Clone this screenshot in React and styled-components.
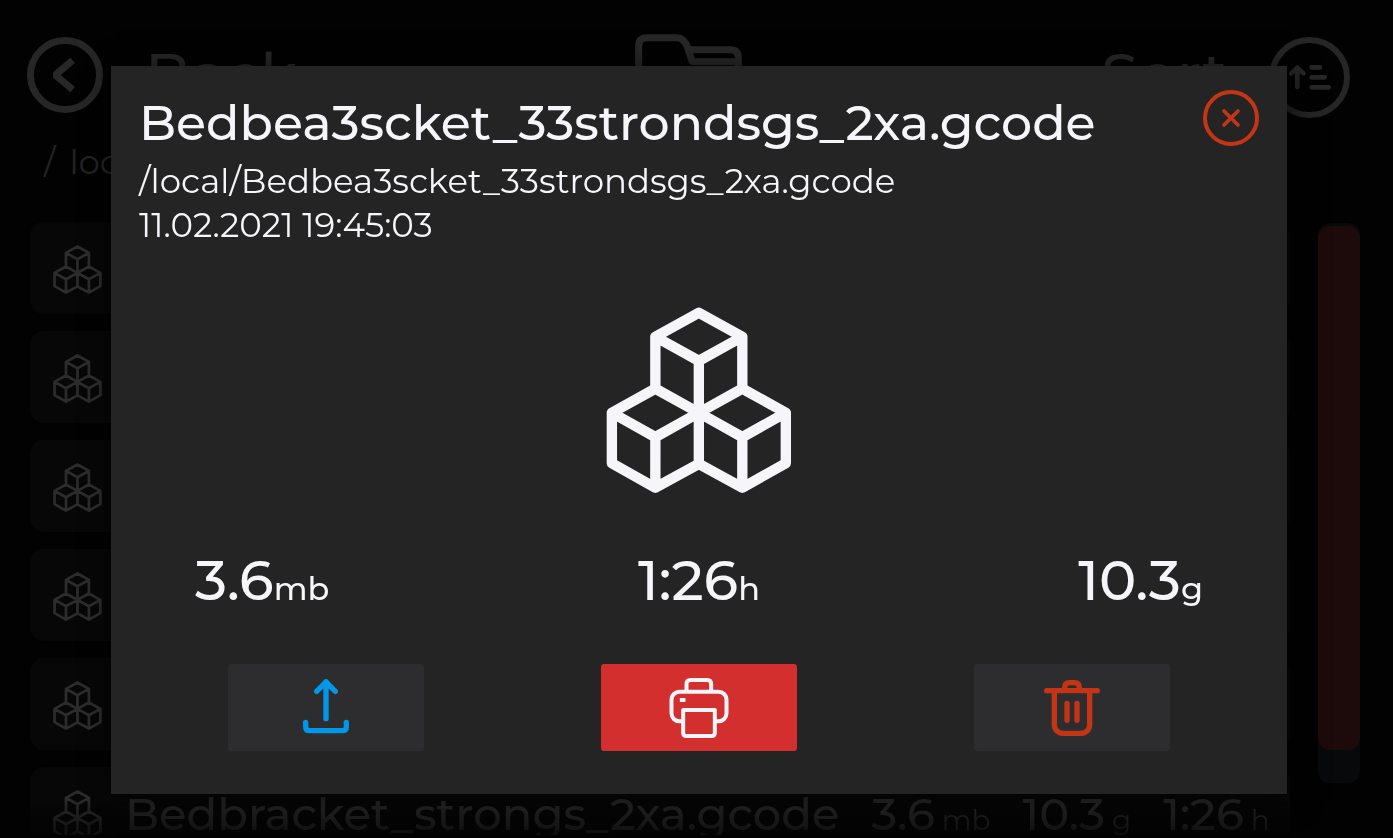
import React from 'react';
import styled, { createGlobalStyle } from 'styled-components';

const GlobalStyle = createGlobalStyle`
  * { box-sizing: border-box; }
  body {
    margin: 0;
    background: #020202;
    color: #f5f5fa;
    font-family: Montserrat, Inter, sans-serif;
  }
  button { font: inherit; color: inherit; padding: 0; cursor: pointer; }
  h1, p, ul { margin: 0; padding: 0; }
`;

const Page = styled.div`
  height: 100vh;
  display: flex;
  flex-direction: column;
  overflow: hidden;
  padding: 34px 33px 3px 30px;
  color: #272727;
`;

const Header = styled.header`
  display: grid;
  grid-template-columns: 1fr auto 1fr;
  align-items: start;
  height: 86px;
  padding-right: 10px;
  margin-left: -3px;
`;

const NavButton = styled.button`
  display: flex;
  align-items: flex-start;
  justify-self: ${(p) => p.$side};
  gap: 42px;
  padding-top: 3px;
  border: 0;
  background: none;
  font-size: 60px;
  line-height: 76px;
  font-weight: 500;
`;

const Ring = styled.span`
  display: grid;
  place-items: center;
  width: ${(p) => p.$size}px;
  height: ${(p) => p.$size}px;
  border: ${(p) => p.$stroke}px solid #262626;
  border-radius: 50%;
`;

const Icon = styled.svg`
  display: block;
  flex: none;
  fill: none;
  stroke: currentColor;
  stroke-linecap: round;
  stroke-linejoin: round;
`;

const Breadcrumb = styled.nav`
  display: flex;
  gap: 14px;
  margin: 20px 14px 0;
  font-size: 34px;
  line-height: 44px;
  color: #232323;
`;

const Browser = styled.main`
  flex: 1;
  min-height: 0;
  display: flex;
  gap: 28px;
  margin-top: 38px;
`;

const FileList = styled.ul`
  flex: 1;
  display: flex;
  flex-direction: column;
  gap: 17px;
  overflow: hidden;
  list-style: none;
  mask-image: linear-gradient(#000 94%, rgba(0, 0, 0, 0.3));
`;

const FileRow = styled.li`
  flex: none;
  display: flex;
  align-items: center;
  height: 92px;
  padding: 2px 22px 0 23px;
  border-radius: 14px;
  background: #070707;
  color: #2c2c2c;
  font-size: 45px;
  line-height: 56px;
  font-weight: 500;
`;

const FileName = styled.span`
  flex: 1;
  padding-left: 23px;
`;

const FileFact = styled.span`
  padding-left: 32px;
  small {
    margin-left: 7px;
    font-size: 28px;
    line-height: 1;
    font-weight: 400;
  }
`;

const ScrollTrack = styled.div`
  width: 42px;
  height: 560px;
  margin-top: 1px;
  padding-top: 3px;
  border-radius: 12px;
  background: #07090b;
`;

const ScrollThumb = styled.div`
  height: 94%;
  border-radius: 12px;
  background: #1d0b0c;
`;

const Overlay = styled.div`
  position: fixed;
  inset: 0;
  display: flex;
  align-items: flex-start;
  padding: 66px 106px 44px 111px;
`;

const Dialog = styled.section`
  flex: 1;
  padding: 24px 28px 43px;
  background: #242424;
  box-shadow: 5px 5px 28px rgba(0, 0, 0, 0.7);
`;

const DialogHead = styled.div`
  display: flex;
  align-items: flex-start;
  justify-content: space-between;
`;

const Title = styled.h1`
  font-size: 49px;
  line-height: 66px;
  font-weight: 500;
`;

const Details = styled.div`
  padding-top: 3px;
`;

const Detail = styled.p`
  font-size: 34px;
  line-height: 44px;
`;

const CloseButton = styled.button`
  display: grid;
  place-items: center;
  width: 56px;
  height: 56px;
  border: 4px solid #c43516;
  border-radius: 50%;
  background: none;
  && { color: #c43516; }
`;

const Preview = styled.div`
  display: flex;
  justify-content: center;
  margin-top: 60px;
`;

const Stats = styled.div`
  display: grid;
  grid-template-columns: repeat(3, 1fr);
  padding: 0 56px;
  margin-top: 51px;
  font-size: 56px;
  line-height: 72px;
  font-weight: 500;
`;

const Stat = styled.div`
  text-align: ${(p) => p.$align};
  small {
    font-size: 32px;
    line-height: 1;
  }
`;

const Actions = styled.div`
  display: grid;
  grid-template-columns: repeat(3, 1fr);
  justify-items: center;
  margin-top: 48px;
`;

const ActionButton = styled.button`
  display: grid;
  place-items: center;
  width: 196px;
  height: 87px;
  border: 0;
  border-radius: 3px;
  background: ${(p) => p.$fill || '#2d2d2f'};
  && { color: ${(p) => p.$color}; }
`;

function Cubes({ size, stroke }) {
  return (
    <Icon width={size} height={size} viewBox="0 0 553 556" strokeWidth={stroke} aria-hidden="true">
      <path d="M276 17 406 89 276 161 146 89ZM146 89V244M406 89V244M276 161V469M146 244 276 316 146 389 16 316ZM406 244 536 316 406 389 276 316ZM16 316V467L146 540 276 469 406 540 536 467V316M146 389V540M406 389V540" />
    </Icon>
  );
}

const files = [
  {}, {}, {}, {}, {},
  {
    name: 'Bedbracket_strongs_2xa.gcode',
    facts: [['3.6', 'mb'], ['10.3', 'g'], ['1:26', 'h']],
  },
];

export default function App() {
  return (
    <>
      <GlobalStyle />
      <Page>
        <Header>
          <NavButton $side="start">
            <Ring $size={76} $stroke={7}>
              <Icon width="26" height="34" viewBox="155 174 78 102" strokeWidth="21">
                <path d="M217 181 165 225 217 269" style={{ strokeLinecap: 'butt', strokeLinejoin: 'bevel' }} />
              </Icon>
            </Ring>
            Back
          </NavButton>
          <Icon width="107" height="86" viewBox="169 102 321 258" strokeWidth="21" aria-hidden="true">
            <path d="M180 325V138q0-25 25-25H295Q315 113 326 140L337 174Q339 185 348 185H468M333 149H455q24 0 24 24V325q0 24-24 24H205q-25 0-25-24" />
          </Icon>
          <NavButton $side="end">
            Sort
            <Ring $size={81} $stroke={6}>
              <Icon width="42" height="25" viewBox="624 200 126 75" strokeWidth="14">
                <path d="M649 266V208M631 225 649 208 667 225M692 207H717M692 237H731M692 267H743" />
              </Icon>
            </Ring>
          </NavButton>
        </Header>
        <Breadcrumb>
          <span>/</span>
          <span>local</span>
        </Breadcrumb>
        <Browser>
          <FileList>
            {files.map((file, i) => (
              <FileRow key={i}>
                <Cubes size={49} stroke={31} />
                {file.name && <FileName>{file.name}</FileName>}
                {file.facts?.map(([value, unit]) => (
                  <FileFact key={unit}>
                    {value}
                    <small>{unit}</small>
                  </FileFact>
                ))}
              </FileRow>
            ))}
          </FileList>
          <ScrollTrack>
            <ScrollThumb />
          </ScrollTrack>
        </Browser>
      </Page>
      <Overlay>
        <Dialog role="dialog" aria-modal="true" aria-labelledby="file-title">
          <DialogHead>
            <div>
              <Title id="file-title">Bedbea3scket_33strondsgs_2xa.gcode</Title>
              <Details>
                <Detail>/local/Bedbea3scket_33strondsgs_2xa.gcode</Detail>
                <Detail>11.02.2021 19:45:03</Detail>
              </Details>
            </div>
            <CloseButton aria-label="Close">
              <Icon width="20" height="20" viewBox="0 0 60 60" strokeWidth="11">
                <path d="M9 9 51 51M51 9 9 51" />
              </Icon>
            </CloseButton>
          </DialogHead>
          <Preview>
            <Cubes size={186} stroke={31} />
          </Preview>
          <Stats>
            <Stat $align="left">3.6<small>mb</small></Stat>
            <Stat $align="center">1:26<small>h</small></Stat>
            <Stat $align="right">10.3<small>g</small></Stat>
          </Stats>
          <Actions>
            <ActionButton $color="#0397e8" aria-label="Upload">
              <Icon width="46" height="58" viewBox="366 414 138 174" strokeWidth="16">
                <path d="M435 533V422M407 451 435 423 463 451M374 544V557Q374 569 386 569H484Q496 569 496 557V544" />
              </Icon>
            </ActionButton>
            <ActionButton $color="#f5f5fa" $fill="#d32f2f" aria-label="Print">
              <Icon width="60" height="60" viewBox="265 411 179 180" strokeWidth="12">
                <path d="M317 448V429q0-12 12-12H379q12 0 12 12V448M302 541h-6a24 24 0 0 1-24-24v-41a24 24 0 0 1 24-24h117a24 24 0 0 1 24 24v41a24 24 0 0 1-24 24h-6M307 507H402V575q0 10-10 10H317q-10 0-10-10Z" />
                <path d="M297 477H314" style={{ strokeLinecap: 'butt' }} />
              </Icon>
            </ActionButton>
            <ActionButton $color="#c43516" aria-label="Delete">
              <Icon width="56" height="56" viewBox="312 417 168 168" strokeWidth="16">
                <path d="M320 449H472M374 447V440q0-15 15-15H403q15 0 15 15V447M343 449V551a26 26 0 0 0 26 26H423a26 26 0 0 0 26-26V449M381 487V538M411 487V538" />
              </Icon>
            </ActionButton>
          </Actions>
        </Dialog>
      </Overlay>
    </>
  );
}
